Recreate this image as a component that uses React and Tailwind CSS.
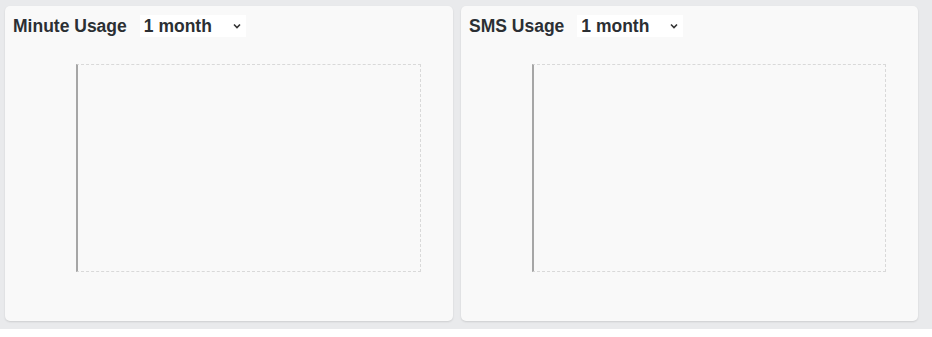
import React from 'react';

const Chevron = () => (
    <svg width="8" height="6" viewBox="0 0 8 6" fill="none">
        <path d="M1 1.5 L4 4.5 L7 1.5" stroke="#333" strokeWidth="1.6" />
    </svg>
);

const UsageCard = ({ title, width }) => (
    <div className={`${width} h-[315px] bg-[#f9f9f9] rounded-[5px] shadow-[0_1px_2px_rgba(0,0,0,0.12)] flex flex-col`}>
        <div className="flex items-center pt-[9px] pl-[8px] h-[31px]">
            <span className="text-[17.5px] font-bold text-[#2b2f33] leading-[22px]">{title}</span>
            <div className="ml-[13px] w-[106px] h-[22px] bg-white flex items-center justify-between pl-[4px] pr-[5px]">
                <span className="text-[17.5px] font-bold text-[#2b2f33] leading-[22px]">1 month</span>
                <Chevron />
            </div>
        </div>
        <div className="mt-[27px] ml-[71px] mr-[32px] h-[208px] border border-dashed border-[#d9d9d9] border-l-2 border-l-[#a6a6a6] [border-left-style:solid]" />
    </div>
);

const App = () => {
    return (
        <div className="w-full h-[329px] bg-[#e9eaec] flex gap-[8px] pl-[5px] pr-[14px] pt-[6px] font-['Liberation_Sans',Arial,sans-serif]">
            <UsageCard title="Minute Usage" width="w-[448px]" />
            <UsageCard title="SMS Usage" width="w-[457px]" />
        </div>
    );
};

export default App;
